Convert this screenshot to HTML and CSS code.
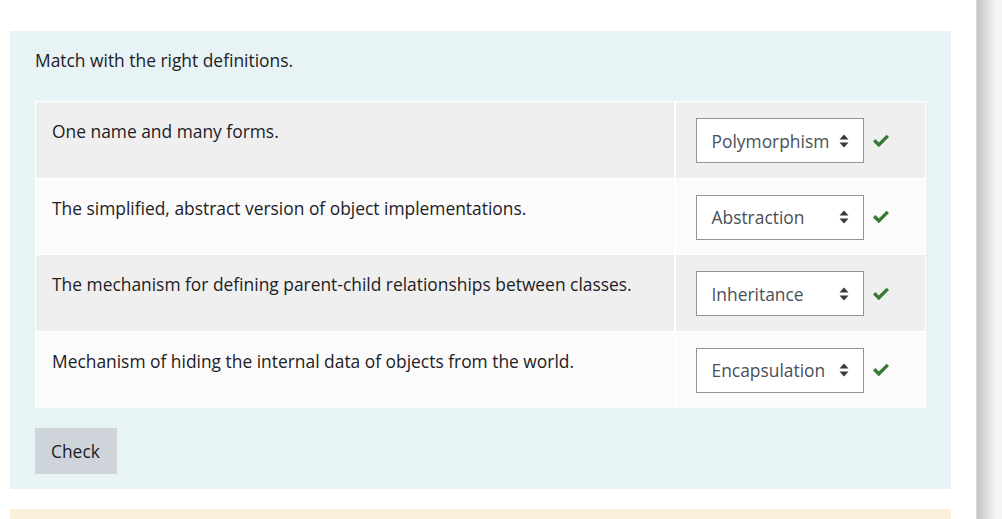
FILE: index.html
```html
<!DOCTYPE html>
<html lang="en">
<head>
<meta charset="utf-8">
<title>Match</title>
<link rel="stylesheet" href="styles.css">
</head>
<body>
<div class="page">
  <div class="main">
    <div class="formulation">
      <p class="qtext">Match with the right definitions.</p>
      <table class="answer">
        <colgroup>
          <col class="col-text">
          <col class="col-control">
        </colgroup>
        <tbody>
          <tr class="r0">
            <td class="text">One name and many forms.</td>
            <td class="control">
              <div class="ctl">
                <div class="select"><span>Polymorphism</span><svg class="arrows" viewBox="0 0 10 14" width="10" height="14"><path d="M5 0.5 L9.5 5.5 H0.5 Z M5 13.5 L9.5 8.5 H0.5 Z" fill="#343a40"/></svg></div>
                <svg class="tick" viewBox="0 0 18 14" width="18" height="14"><path d="M1 7.5 L3.4 5.1 L6.8 8.5 L14.6 0.7 L17 3.1 L6.8 13.3 Z" fill="#357a32"/></svg>
              </div>
            </td>
          </tr>
          <tr class="r1">
            <td class="text">The simplified, abstract version of object implementations.</td>
            <td class="control">
              <div class="ctl">
                <div class="select"><span>Abstraction</span><svg class="arrows" viewBox="0 0 10 14" width="10" height="14"><path d="M5 0.5 L9.5 5.5 H0.5 Z M5 13.5 L9.5 8.5 H0.5 Z" fill="#343a40"/></svg></div>
                <svg class="tick" viewBox="0 0 18 14" width="18" height="14"><path d="M1 7.5 L3.4 5.1 L6.8 8.5 L14.6 0.7 L17 3.1 L6.8 13.3 Z" fill="#357a32"/></svg>
              </div>
            </td>
          </tr>
          <tr class="r0">
            <td class="text">The mechanism for defining parent-child relationships between classes.</td>
            <td class="control">
              <div class="ctl">
                <div class="select"><span>Inheritance</span><svg class="arrows" viewBox="0 0 10 14" width="10" height="14"><path d="M5 0.5 L9.5 5.5 H0.5 Z M5 13.5 L9.5 8.5 H0.5 Z" fill="#343a40"/></svg></div>
                <svg class="tick" viewBox="0 0 18 14" width="18" height="14"><path d="M1 7.5 L3.4 5.1 L6.8 8.5 L14.6 0.7 L17 3.1 L6.8 13.3 Z" fill="#357a32"/></svg>
              </div>
            </td>
          </tr>
          <tr class="r1">
            <td class="text">Mechanism of hiding the internal data of objects from the world.</td>
            <td class="control">
              <div class="ctl">
                <div class="select"><span>Encapsulation</span><svg class="arrows" viewBox="0 0 10 14" width="10" height="14"><path d="M5 0.5 L9.5 5.5 H0.5 Z M5 13.5 L9.5 8.5 H0.5 Z" fill="#343a40"/></svg></div>
                <svg class="tick" viewBox="0 0 18 14" width="18" height="14"><path d="M1 7.5 L3.4 5.1 L6.8 8.5 L14.6 0.7 L17 3.1 L6.8 13.3 Z" fill="#357a32"/></svg>
              </div>
            </td>
          </tr>
        </tbody>
      </table>
      <button class="check" type="button">Check</button>
    </div>
    <div class="outcome"></div>
  </div>
  <div class="scrollbar"></div>
</div>
</body>
</html>
```

FILE: styles.css
```css
html, body {
  margin: 0;
  padding: 0;
  background: #ffffff;
}
body {
  font-family: "Open Sans", "Noto Sans", sans-serif;
  font-size: 17.4px;
  color: #1d2125;
}
.page {
  display: flex;
  height: 519px;
  overflow: hidden;
}
.main {
  width: 976px;
  padding: 31px 25px 0 10px;
  box-sizing: border-box;
}
.formulation {
  width: 941px;
  box-sizing: border-box;
  background: #e7f3f5;
  padding: 17px 25px 15px 25px;
}
.qtext {
  margin: 0 0 29px 0;
  line-height: 24px;
}
.answer {
  width: 890px;
  table-layout: fixed;
  border-collapse: collapse;
  background: #ffffff;
}
.col-text { width: 639px; }
.col-control { width: 251px; }
.answer td {
  border: 1px solid #ffffff;
  vertical-align: top;
}
.answer tr.r0 td { background: #efefef; }
.answer tr.r1 td { background: #fbfbfb; }
.answer td.text {
  padding: 17px 16px 0 16px;
  line-height: 24px;
  border-right-width: 2px;
}
.answer td.control {
  padding: 16px 0 14.5px 20px;
}
.ctl {
  display: flex;
  align-items: center;
  gap: 8px;
}
.select {
  width: 168px;
  height: 45px;
  box-sizing: border-box;
  border: 1px solid #8f959e;
  background: #ffffff;
  color: #495057;
  display: flex;
  align-items: center;
  justify-content: space-between;
  padding: 0 14px 0 15px;
  white-space: nowrap;
}
.arrows {
  display: block;
  flex: none;
}
.tick {
  display: block;
}
.check {
  margin-top: 20px;
  display: block;
  height: 46px;
  padding: 0 17px 0 16px;
  border: none;
  border-radius: 0;
  background: #ced4da;
  color: #1d2125;
  font-family: inherit;
  font-size: 17.4px;
}
.outcome {
  margin-top: 20px;
  width: 941px;
  height: 40px;
  background: #fcefdc;
}
.scrollbar {
  width: 26px;
  flex: none;
  border-left: 1px solid #d9d9d9;
  background: linear-gradient(to right, #c4c4c4, #f3f3f3 70%, #f5f5f5);
}
```
